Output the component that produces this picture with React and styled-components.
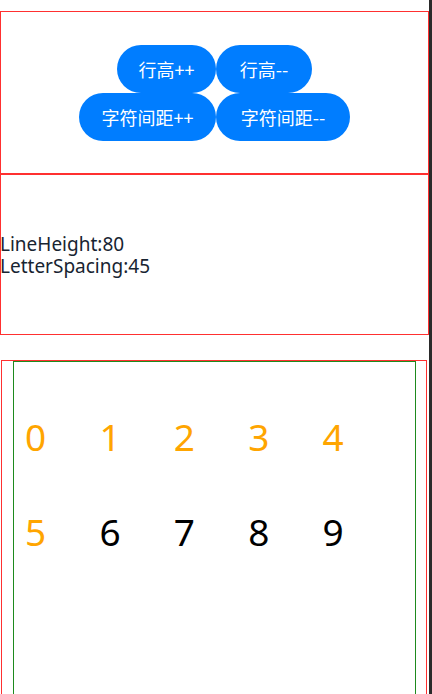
import React from "react";
import styled, { createGlobalStyle } from "styled-components";

const GlobalStyle = createGlobalStyle`
  html, body {
    margin: 0;
    padding: 0;
    background: #fff;
  }
  body {
    font-family: "Noto Sans", "Noto Sans CJK SC", sans-serif;
  }
`;

const digits = [0, 1, 2, 3, 4, 5, 6, 7, 8, 9];

const App = () => {
  return (
    <>
      <GlobalStyle />
      <Screen>
        <Main>
          <ButtonPanel>
            <BtnRow>
              <PillButton w={99}>行高++</PillButton>
              <PillButton w={96}>行高--</PillButton>
            </BtnRow>
            <BtnRow>
              <PillButton w={137}>字符间距++</PillButton>
              <PillButton w={134}>字符间距--</PillButton>
            </BtnRow>
          </ButtonPanel>
          <InfoPanel>
            <InfoLine>LineHeight:80</InfoLine>
            <InfoLine>LetterSpacing:45</InfoLine>
          </InfoPanel>
          <GridPanel>
            <GridInner>
              {digits.map((d) => (
                <Digit key={d} active={d <= 5}>
                  {d}
                </Digit>
              ))}
            </GridInner>
          </GridPanel>
        </Main>
        <ScrollRail />
      </Screen>
    </>
  );
};

const Screen = styled.div`
  display: flex;
  width: 432px;
  height: 694px;
  overflow: hidden;
`;

const Main = styled.div`
  width: 429px;
  display: flex;
  flex-direction: column;
  padding-top: 11px;
  box-sizing: border-box;
`;

const ScrollRail = styled.div`
  width: 3px;
  background: #2a2a2a;
`;

const ButtonPanel = styled.div`
  height: 163px;
  border: 1px solid #ff3030;
  box-sizing: border-box;
  display: flex;
  flex-direction: column;
  align-items: center;
  justify-content: center;
`;

const BtnRow = styled.div`
  display: flex;
`;

const PillButton = styled.button`
  width: ${(p) => p.w}px;
  height: 48px;
  border: none;
  border-radius: 24px;
  background: #007dff;
  color: #fff;
  font-family: "Noto Sans CJK SC", "Noto Sans", sans-serif;
  font-size: 18px;
  padding: 0;
  cursor: pointer;
`;

const InfoPanel = styled.div`
  height: 161px;
  border: 1px solid #ff3030;
  box-sizing: border-box;
  display: flex;
  flex-direction: column;
  justify-content: center;
  color: #182431;
`;

const InfoLine = styled.div`
  font-size: 19px;
  line-height: 22px;
  margin-left: -1px;
`;

const GridPanel = styled.div`
  flex: 1;
  margin: 25px 2px 0 1px;
  border: 1px solid #ff3030;
  border-bottom: none;
  display: flex;
  flex-direction: column;
`;

const GridInner = styled.div`
  flex: 1;
  margin: 0 10px 0 11px;
  border: 1px solid #1e8a1e;
  border-bottom: none;
  padding: 56px 0 0 11px;
  display: grid;
  grid-template-columns: repeat(5, 74.4px);
  grid-auto-rows: 37px;
  row-gap: 58px;
  align-content: start;
`;

const Digit = styled.div`
  font-size: 37px;
  line-height: 37px;
  color: ${(p) => (p.active ? "#ffa500" : "#000")};
`;

export default App;
